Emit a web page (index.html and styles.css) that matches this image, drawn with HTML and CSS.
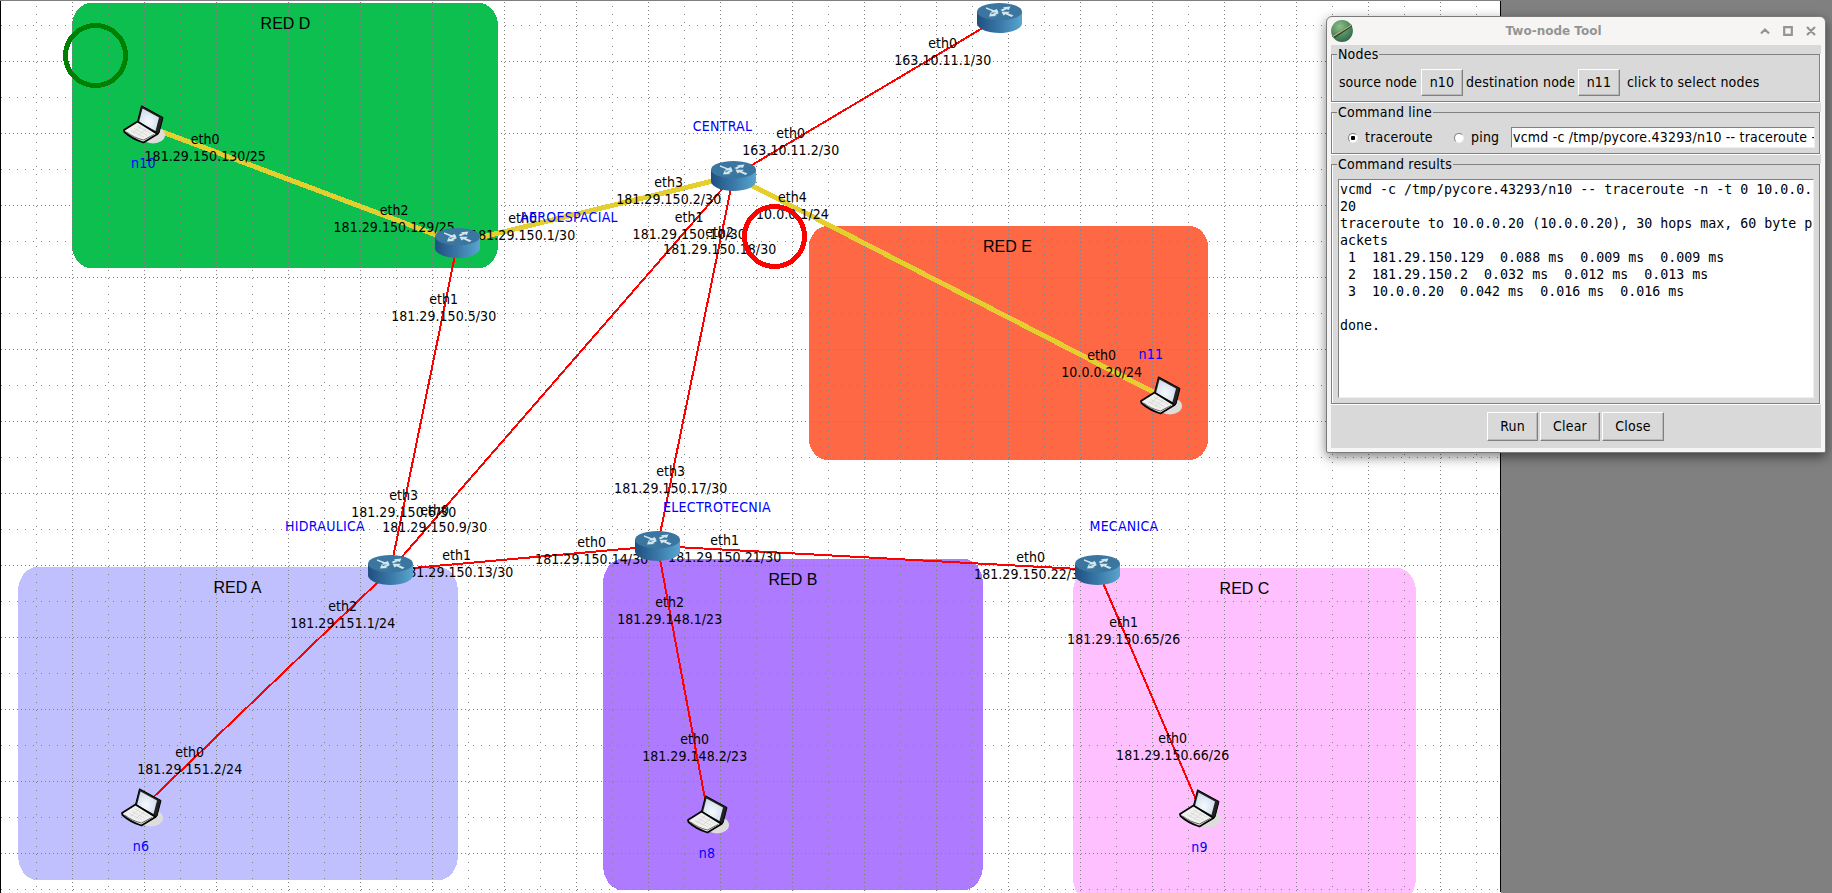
FILE: index.html
```html
<!DOCTYPE html>
<html lang="es">
<head>
<meta charset="utf-8">
<title>Two-node Tool</title>
<link rel="stylesheet" href="styles.css">
</head>
<body>
<main class="desktop">
<svg class="topology" width="1501" height="893" viewBox="0 0 1501 893">
  <defs>
    <linearGradient id="side" x1="0" x2="1" y1="0" y2="0">
      <stop offset="0" stop-color="#1f4f80"/><stop offset=".5" stop-color="#3a78a8"/><stop offset="1" stop-color="#5aa5d0"/>
    </linearGradient>
    <radialGradient id="screen" cx=".45" cy=".6" r=".6">
      <stop offset="0" stop-color="#f6fafe"/><stop offset="1" stop-color="#cfdcec"/>
    </radialGradient>
    <symbol id="router" viewBox="0 0 45 30">
      <path d="M0 9V21C1 26 11 30 22.500 30S44 26 45 21V9Z" fill="url(#side)"/>
      <ellipse cx="22.500" cy="8.700" rx="22.500" ry="8.700" fill="#3a769f"/>
      <path d="M9 4.300L17 7.200L19.800 6L21.500 9.200L13 9.800L15.200 8.300L9 5.800Z" fill="#d3e6ee"/>
      <path d="M33.500 3.400L31.800 7L29.800 6.200L25.500 8.300L23.500 7L27.500 5L25.500 4.200Z" fill="#d3e6ee"/>
      <path d="M12 13.600L13.300 9.900L15.500 10.900L20 8.800L22 10L17.800 12.200L20 13Z" fill="#d3e6ee"/>
      <path d="M24.500 8.800L33 8.800L31 10.200L36.500 12.600L34.500 14L28.500 11.200L26.500 12.500Z" fill="#d3e6ee"/>
    </symbol>
    <symbol id="laptop" viewBox="0 0 42 39">
      <ellipse cx="30" cy="30" rx="12" ry="8.500" fill="#dddddb"/>
      <path d="M18.500 .8L40 12.500L36 28L34 29.500L14.500 16.500Z" fill="#222" stroke="#000" stroke-linejoin="round"/>
      <path d="M19.500 3.500L36 12.400L32.500 26L16 17Z" fill="url(#screen)"/>
      <path d="M1 25L14.500 16.500L34.500 29L20.500 37.500C14 35.500 7 32 1.500 27Z" fill="#f0f0ee" stroke="#050505" stroke-width="1.800" stroke-linejoin="round"/>
      <path d="M3.500 27C9 31 14 33.500 20.500 35L31 29.500" fill="none" stroke="#444" stroke-width=".8"/>
      <path d="M8 25.500L21 32M11 23.500L24.500 30.500M14 21L28 28.500M10 28L18 21M15 30.500L23 24" stroke="#d2d2d2" stroke-width=".7"/>
    </symbol>
  </defs>
  <rect class="paper" width="1501" height="893"/>
  <g class="regions">
    <rect x="72" y="3" width="426" height="265" rx="19" ry="23" fill="#0cbf4f"/>
    <rect x="809" y="226" width="399" height="234" rx="19" ry="21" fill="#ff6844"/>
    <rect x="18" y="567" width="440" height="313" rx="19" ry="25" fill="#c0c0ff"/>
    <rect x="603" y="559" width="380" height="331" rx="19" ry="25" fill="#ae7aff"/>
    <rect x="1073" y="568" width="343" height="334" rx="19" ry="24" fill="#ffc0ff"/>
  </g>
  <g id="grid"></g>
  <path class="edge" d="M.5 1V893M1500.500 1V892"/>
  <path class="edge-top" d="M0 .5H1501"/>
  <g id="links"></g>
  <g id="labels"></g>
  <g id="nodes"></g>
  <circle class="mark" cx="95.500" cy="55.500" r="30" stroke="#008000"/>
  <circle class="mark" cx="774.500" cy="236.500" r="30" stroke="#f00"/>
</svg>

<section class="window">
  <header class="titlebar">
    <svg class="globe" width="22" height="22" viewBox="0 0 22 22">
      <defs><radialGradient id="g" cx=".4" cy=".3" r=".75"><stop offset="0" stop-color="#8cc08a"/><stop offset=".6" stop-color="#4f8a5c"/><stop offset="1" stop-color="#2e6350"/></radialGradient></defs>
      <circle cx="11" cy="11" r="10.900" fill="url(#g)"/>
      <path d="M1 16.500L20.500 4.500L21 6.500L4 18Z" fill="#3a4a32"/>
      <path d="M2 16.500L20.500 5" stroke="#c9cf9e" stroke-width="1"/>
    </svg>
    <h1 class="title">Two-node Tool</h1>
    <svg class="controls" width="56" height="10" viewBox="0 0 56 10">
      <path d="M1 7.500L5 3.500L9 7.500M24.200 1.200H31.800V8.800H24.200ZM47 1L55 9M55 1L47 9" fill="none" stroke="#929595" stroke-width="2.200"/>
    </svg>
  </header>
  <div class="content">
    <fieldset class="frame frame-nodes">
      <legend>Nodes</legend>
      <div class="row">
        <span class="lbl-source">source node</span><button class="btn pick">n10</button>
        <span class="lbl-dest">destination node</span><button class="btn pick">n11</button>
        <span class="lbl-hint">click to select nodes</span>
      </div>
    </fieldset>
    <fieldset class="frame frame-line">
      <legend>Command line</legend>
      <div class="row">
        <span class="radio on"></span><span class="lbl-trace">traceroute</span>
        <span class="radio"></span><span class="lbl-ping">ping</span>
        <div class="entry">vcmd -c /tmp/pycore.43293/n10 -- traceroute -n</div>
      </div>
    </fieldset>
    <fieldset class="frame frame-results">
      <legend>Command results</legend>
      <pre class="output">vcmd -c /tmp/pycore.43293/n10 -- traceroute -n -t 0 10.0.0.
20
traceroute to 10.0.0.20 (10.0.0.20), 30 hops max, 60 byte p
ackets
 1  181.29.150.129  0.088 ms  0.009 ms  0.009 ms
 2  181.29.150.2  0.032 ms  0.012 ms  0.013 ms
 3  10.0.0.20  0.042 ms  0.016 ms  0.016 ms

done.</pre>
    </fieldset>
    <div class="actions">
      <button class="btn run">Run</button><button class="btn clear">Clear</button><button class="btn close">Close</button>
    </div>
  </div>
</section>
</main>
<script src="topology.js"></script>
</body>
</html>
```
FILE: styles.css
```css
* { box-sizing: border-box; }
body { margin: 0; background: #808080; overflow: hidden; }
.desktop {
  position: relative;
  width: 1832px;
  height: 893px;
  background: #808080;
  font: 14px/17px "DejaVu Sans Condensed", "DejaVu Sans", sans-serif;
  font-stretch: condensed;
  color: #000;
}
.topology { display: block; }
.paper { fill: #fff; }
.regions, #grid, .edge, .edge-top { shape-rendering: crispEdges; }
.edge { stroke: #000; fill: none; }
.edge-top { stroke: #808080; }
.grid-line { stroke: #808080; fill: none; }
.major { stroke-dasharray: 1 3; }
.minor { stroke-dasharray: 1 7; }
.link { stroke: #f00; stroke-width: 2; shape-rendering: crispEdges; }
.link.hot { stroke: #e3cf30; stroke-width: 5; }
.mark { fill: none; stroke-width: 5; shape-rendering: crispEdges; }
.label { text-anchor: middle; letter-spacing: .05px; }
.name { text-anchor: middle; fill: #00f; letter-spacing: .28px; }
.area { text-anchor: middle; font: 16px "Liberation Sans", Arial, sans-serif; }

.window {
  position: absolute;
  left: 1326px;
  top: 16px;
  width: 500px;
  height: 437px;
  border: 1px solid #7b7b79;
  border-radius: 6px 6px 2px 2px;
  background: #f6f5f4;
  box-shadow: 0 4px 12px rgba(0, 0, 0, .5);
  padding: 0 4px 4px;
  display: flex;
  flex-direction: column;
  letter-spacing: .2px;
}
.titlebar {
  height: 28px;
  flex: none;
  display: flex;
  align-items: center;
  justify-content: space-between;
  padding-right: 5px;
}
.globe { margin-top: -1px; }
.title {
  margin: 0 6px 0 0;
  font: bold 12px/16px "DejaVu Sans", sans-serif;
  font-stretch: normal;
  letter-spacing: 0;
  color: #929595;
}
.content {
  flex: 1;
  background: #d9d9d9;
  display: flex;
  flex-direction: column;
  padding-top: 1px;
}
.frame {
  margin: 0 1px 0 0;
  min-width: 0;
  padding: 0;
  border: 1px solid #808080;
  box-shadow: inset 1px 0 #fff, 1px 0 #fff, 0 1px #fff;
}
.frame legend { margin-left: 5px; padding: 0 1px; height: 17px; line-height: 17px; }
.frame-nodes { height: 56px; margin-bottom: 2px; }
.frame-line { height: 50px; margin-bottom: 2px; }
.frame-results { height: 248px; }
.row { display: flex; align-items: center; white-space: nowrap; }
.btn {
  font: inherit;
  color: inherit;
  letter-spacing: inherit;
  padding: 0;
  background: #d9d9d9;
  border: 1px solid;
  border-color: #fff #808080 #808080 #fff;
  box-shadow: inset -1px -1px #b9b9b9;
  border-radius: 0;
  flex: none;
}
.pick { width: 42px; height: 27px; }
.frame-nodes .row { margin: 6px 0 0 7px; }
.lbl-source { width: 82px; letter-spacing: .05px; }
.lbl-dest { width: 115px; padding-left: 3px; }
.lbl-hint { padding-left: 7px; }
.frame-line .row { margin: 6px 4px 0 16px; height: 21px; }
.radio {
  width: 10px;
  height: 10px;
  border-radius: 50%;
  background: #fff;
  border: 1px solid;
  border-color: #808080 #eee #eee #808080;
  flex: none;
}
.radio.on { background: radial-gradient(circle, #000 0 2px, #fff 2.500px); }
.lbl-trace { width: 96px; padding-left: 7px; }
.lbl-ping { width: 47px; padding-left: 7px; }
.entry {
  width: 304px;
  height: 21px;
  background: #fff;
  border: 1px solid;
  border-color: #808080 #eee #eee #808080;
  padding: 1px 0 0 1px;
  overflow: hidden;
}
.output {
  margin: 6px 0 0 6px;
  width: 476px;
  height: 219px;
  background: #fff;
  border: 1px solid;
  border-color: #808080 #eee #eee #808080;
  padding: 1px 0 0 1px;
  overflow: hidden;
  font: 13.300px/17px "DejaVu Sans Mono", monospace;
  letter-spacing: 0;
}
.actions { display: flex; gap: 2px; padding: 8px 0 0 156px; }
.actions .btn { height: 29px; }
.run { width: 51px; }
.clear { width: 60px; }
.close { width: 62px; }
```
FILE: topology.js
```js
const NS = 'http://www.w3.org/2000/svg';
const add = (parent, tag, attrs, text) => {
  const el = document.createElementNS(NS, tag);
  for (const k in attrs) el.setAttribute(k, attrs[k]);
  if (text) el.textContent = text;
  document.getElementById(parent).appendChild(el);
};

for (let x = 36; x < 1500; x += 36)
  add('grid', 'path', { class: 'grid-line ' + (x % 72 ? 'minor' : 'major'), d: `M${x + .5} -2V893` });
for (let y = 25; y < 893; y += 36)
  add('grid', 'path', { class: 'grid-line ' + ((y - 25) % 72 ? 'major' : 'minor'), d: `M1 ${y + .5}H1500` });

const P = {
  top: [999.5, 18], central: [733.5, 176], aero: [457.5, 243], hidra: [390.5, 570],
  electro: [657.5, 546], mec: [1097.5, 570],
  n10: [144, 125], n11: [1161, 396], n9: [1200, 809], n6: [142, 808], n8: [708, 815]
};
[['top', 'central'], ['aero', 'hidra'], ['central', 'hidra'], ['central', 'electro'],
 ['hidra', 'electro'], ['electro', 'mec'], ['hidra', 'n6'], ['electro', 'n8'], ['mec', 'n9'],
 ['n10', 'aero', 1], ['aero', 'central', 1], ['central', 'n11', 1]].forEach(([a, b, hot]) =>
  add('links', 'line', { class: hot ? 'link hot' : 'link', x1: P[a][0], y1: P[a][1], x2: P[b][0], y2: P[b][1] }));

[[205.5, 144, 'eth0', '181.29.150.130/25'], [394.5, 215, 'eth2', '181.29.150.129/25'],
 [523, 223, 'eth0', '181.29.150.1/30'], [669, 187, 'eth3', '181.29.150.2/30'],
 [689.5, 222, 'eth1', '181.29.150.10/30'], [720, 237, 'eth2', '181.29.150.18/30'],
 [792.7, 202, 'eth4', '10.0.0.1/24'], [791, 138, 'eth0', '163.10.11.2/30'],
 [943, 48, 'eth0', '163.10.11.1/30'], [444, 304, 'eth1', '181.29.150.5/30'],
 [404, 500, 'eth3', '181.29.150.6/30'], [435, 515, 'eth0', '181.29.150.9/30'],
 [457, 560, 'eth1', '181.29.150.13/30'], [343, 611, 'eth2', '181.29.151.1/24'],
 [190, 757, 'eth0', '181.29.151.2/24'], [592, 547, 'eth0', '181.29.150.14/30'],
 [671, 476, 'eth3', '181.29.150.17/30'], [725, 545, 'eth1', '181.29.150.21/30'],
 [670, 607, 'eth2', '181.29.148.1/23'], [695, 744, 'eth0', '181.29.148.2/23'],
 [1031, 562, 'eth0', '181.29.150.22/30'], [1124, 627, 'eth1', '181.29.150.65/26'],
 [1173, 743, 'eth0', '181.29.150.66/26'], [1102, 360, 'eth0', '10.0.0.20/24']
].forEach(([x, y, iface, ip]) => {
  add('labels', 'text', { class: 'label', x: x - .3, y }, iface);
  add('labels', 'text', { class: 'label', x: x - .3, y: y + 17 }, ip);
});

[[285.5, 29, 'RED D'], [1007.5, 252, 'RED E'], [237.5, 593, 'RED A'], [793, 585, 'RED B'], [1244.5, 594, 'RED C']]
  .forEach(([x, y, t]) => add('labels', 'text', { class: 'area', x, y }, t));

['top', 'central', 'aero', 'hidra', 'electro', 'mec'].forEach(n =>
  add('nodes', 'use', { href: '#router', x: P[n][0] - 22.5, y: P[n][1] - 15, width: 45, height: 30 }));
['n10', 'n11', 'n9', 'n6', 'n8'].forEach(n =>
  add('nodes', 'use', { href: '#laptop', x: P[n][0] - 21, y: P[n][1] - 20, width: 42, height: 39 }));

[[143.5, 168, 'n10'], [722.5, 131, 'CENTRAL'], [569, 222, 'AEROESPACIAL'], [325, 531, 'HIDRAULICA'],
 [717, 512, 'ELECTROTECNIA'], [1124, 531, 'MECANICA'], [1151, 359, 'n11'], [1199.5, 852, 'n9'],
 [141, 851, 'n6'], [707, 858, 'n8']]
  .forEach(([x, y, t]) => add('nodes', 'text', { class: 'name', x, y }, t));
```
